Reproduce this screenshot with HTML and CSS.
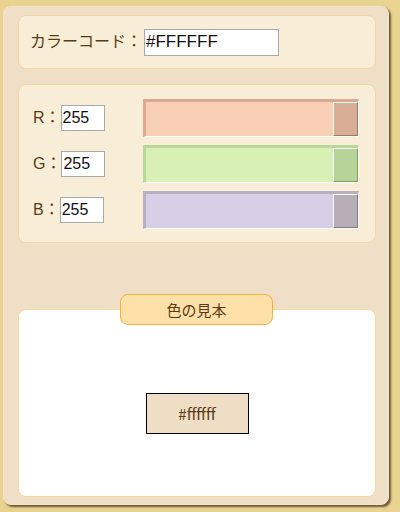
FILE: index.html
```html
<!DOCTYPE html>
<html lang="ja">
<head>
<meta charset="utf-8">
<link rel="stylesheet" href="styles.css">
</head>
<body>
<div class="panel">
  <div class="card code-card">
    <span class="label">カラーコード：</span><input class="code-input" type="text" value="#FFFFFF">
  </div>
  <div class="card rgb-card">
    <div class="row">
      <div class="field"><span class="label">R：</span><input class="num" type="text" value="255"></div>
      <div class="slider r"><div class="thumb"></div></div>
    </div>
    <div class="row">
      <div class="field"><span class="label">G：</span><input class="num" type="text" value="255"></div>
      <div class="slider g"><div class="thumb"></div></div>
    </div>
    <div class="row">
      <div class="field"><span class="label">B：</span><input class="num" type="text" value="255"></div>
      <div class="slider b"><div class="thumb"></div></div>
    </div>
  </div>
  <div class="card sample-card">
    <div class="tab">色の見本</div>
    <div class="swatch">#ffffff</div>
  </div>
</div>
</body>
</html>
```

FILE: styles.css
```css
* { box-sizing: border-box; }
html, body { margin: 0; padding: 0; }
body {
  background: #e9d390;
  width: 400px;
  height: 512px;
  overflow: hidden;
  font-family: "Liberation Sans", "Noto Sans CJK JP", sans-serif;
  color: #5a3a14;
}
.panel {
  margin: 6px 0 0 3px;
  width: 386px;
  height: 499px;
  background: #f0dfc7;
  border: 1px solid #f3e4cf;
  border-radius: 8px;
  box-shadow: 2px 2px 2px #6e5836;
  padding: 8px 12px 0 14px;
}
.card {
  background: #f8eed8;
  border: 1px solid #f6d4a0;
  border-radius: 8px;
}
.code-card {
  height: 54px;
  display: flex;
  align-items: center;
  padding-left: 11px;
}
.label {
  font-size: 16px;
  line-height: 20px;
}
.code-input {
  margin-left: 2px;
  width: 135px;
  height: 27px;
  border: 1px solid #a9a9a9;
  background: #fff;
  font-family: "Liberation Sans", sans-serif;
  font-size: 17px;
  color: #111;
  padding: 0 1px;
  outline: none;
}
.rgb-card {
  margin-top: 15px;
  height: 159px;
  padding: 14px 16px 0 14px;
  display: flex;
  flex-direction: column;
  gap: 8px;
}
.row {
  display: flex;
  align-items: center;
  justify-content: space-between;
  height: 38px;
}
.field {
  display: flex;
  align-items: center;
}
.num {
  width: 44px;
  height: 26px;
  border: 1px solid #a9a9a9;
  background: #fff;
  font-family: "Liberation Sans", sans-serif;
  font-size: 16px;
  color: #111;
  padding: 0 1px;
  outline: none;
}
.slider {
  width: 216px;
  height: 38px;
  border-style: solid;
  border-width: 3px 1px 1px 3px;
  border-right-color: #fff;
  border-bottom-color: #fff;
  display: flex;
  justify-content: flex-end;
}
.thumb {
  width: 25px;
  height: 100%;
  border: 1px solid #fff;
}
.slider.r { background: #f9cfb5; border-top-color: #d9a993; border-left-color: #d9a993; }
.slider.r .thumb { background: #d8ae96; border-right-color: #a47a62; border-bottom-color: #a47a62; }
.slider.g { background: #d9f0b5; border-top-color: #b9d799; border-left-color: #b9d799; }
.slider.g .thumb { background: #b7d39a; border-right-color: #7f9f62; border-bottom-color: #7f9f62; }
.slider.b { background: #d8cfe6; border-top-color: #b8b0bf; border-left-color: #b8b0bf; }
.slider.b .thumb { background: #b8aeb8; border-right-color: #857b85; border-bottom-color: #857b85; }
.sample-card {
  position: relative;
  margin-top: 66px;
  height: 188px;
  background: #fff;
  border-color: #f7d9a0;
  padding-top: 83px;
  display: flex;
  justify-content: center;
}
.tab {
  position: absolute;
  top: -16px;
  left: 101px;
  width: 153px;
  height: 31px;
  background: #fee0a8;
  border: 1px solid #f2b33d;
  border-radius: 8px;
  display: flex;
  align-items: center;
  justify-content: center;
  font-size: 15px;
}
.swatch {
  width: 103px;
  height: 41px;
  background: #efdec6;
  border: 1px solid #000;
  display: flex;
  align-items: center;
  justify-content: center;
  font-family: "Noto Sans CJK JP", sans-serif;
  font-size: 15px;
}
```
